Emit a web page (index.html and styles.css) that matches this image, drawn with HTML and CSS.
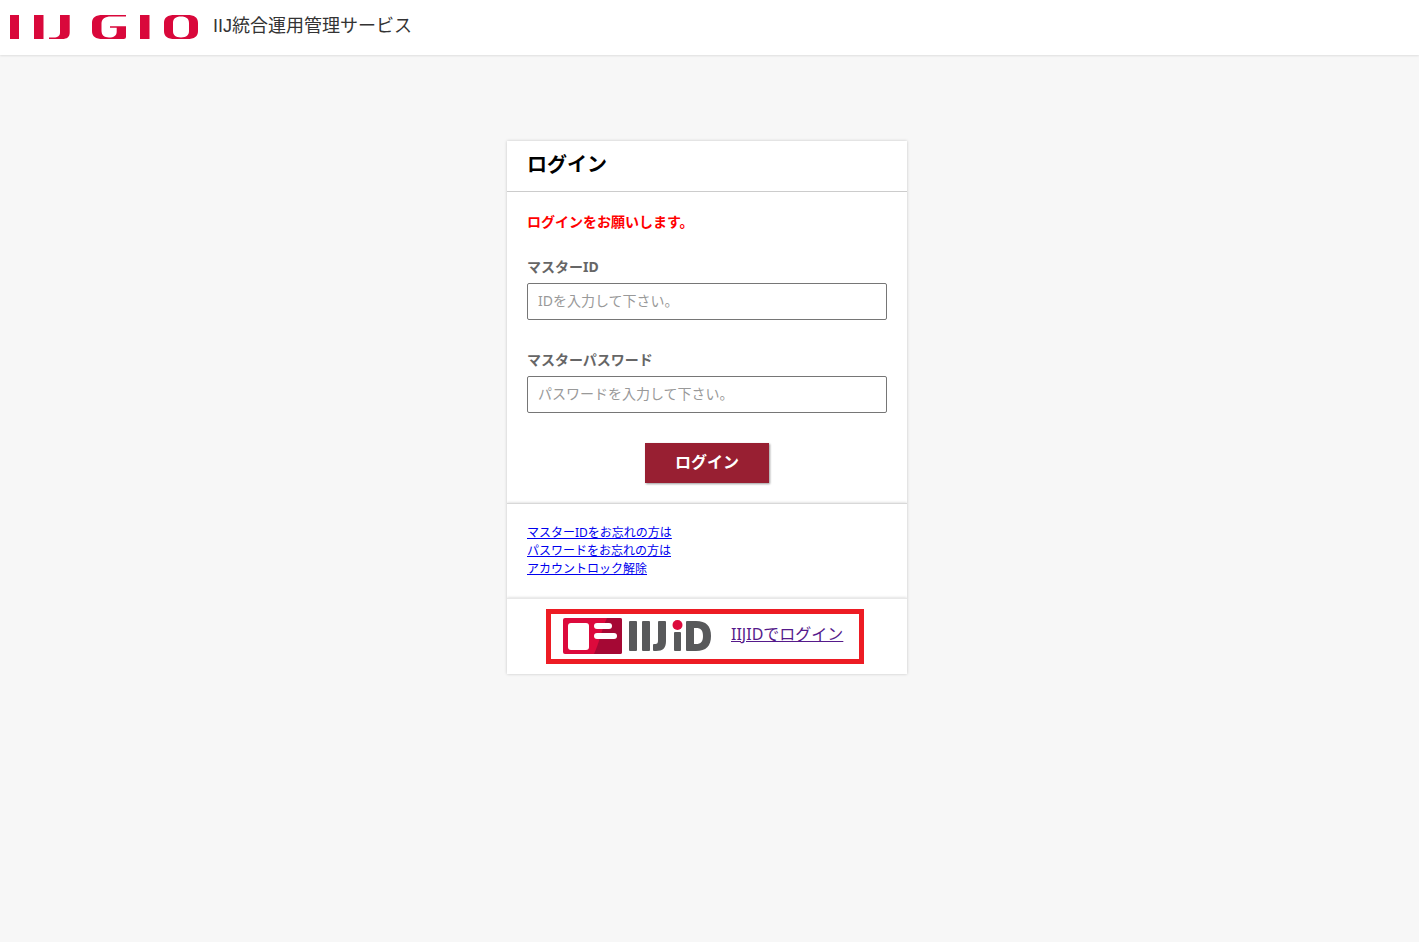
FILE: index.html
```html
<!DOCTYPE html>
<html lang="ja">
<head>
  <meta charset="UTF-8">
  <meta name="viewport" content="width=device-width, initial-scale=1.0">
  <title>ログイン | IIJ統合運用管理サービス</title>
  <link rel="stylesheet" href="styles.css">
</head>
<body>
  <header class="header">
    <svg class="gio-logo" width="188" height="24" viewBox="0 0 188 24" role="img" aria-label="IIJ GIO">
      <g fill="#d9083b">
        <rect x="0" y="0" width="9" height="24"/>
        <rect x="24" y="0" width="9.500" height="24"/>
        <path d="M50 0h9.700v17.500c0 4.500-2.700 6.500-7.500 6.500H39v-1.500h4.500c4.500 0 6.500-1.500 6.500-5z"/>
        <path d="M116 0v1.600h-15c-6 0-9.500 2.400-9.500 7v7c0 4.600 2.500 6.900 7.500 6.900s7.700-2 7.700-6v-3.700H100v-1.600h16v10.300c0 1.700-.8 2.500-2.500 2.500H93c-7.500 0-11-2.500-11-8V8c0-5.500 3.500-8 11-8z"/>
        <rect x="130" y="0" width="9.500" height="24"/>
        <path fill-rule="evenodd" d="M165 0h12c7.500 0 11 2.500 11 8v8c0 5.500-3.500 8-11 8h-12c-7.500 0-11-2.500-11-8V8c0-5.500 3.500-8 11-8zm6 1.600c-5.500 0-8 2.200-8 6.400v8c0 4.200 2.500 6.400 8 6.400s8-2.200 8-6.400V8c0-4.200-2.500-6.400-8-6.400z"/>
      </g>
    </svg>
    <span class="service-name">IIJ統合運用管理サービス</span>
  </header>

  <main class="main">
    <section class="card">
      <h1 class="card-title">ログイン</h1>
      <form class="login-form">
        <p class="message">ログインをお願いします。</p>
        <div class="field">
          <label for="masterId">マスターID</label>
          <input type="text" id="masterId" placeholder="IDを入力して下さい。">
        </div>
        <div class="field">
          <label for="masterPassword">マスターパスワード</label>
          <input type="password" id="masterPassword" placeholder="パスワードを入力して下さい。">
        </div>
        <button type="submit" class="login-button">ログイン</button>
      </form>
    </section>

    <section class="card links">
      <a href="#">マスターIDをお忘れの方は</a>
      <a href="#">パスワードをお忘れの方は</a>
      <a href="#">アカウントロック解除</a>
    </section>

    <section class="card sso">
      <div class="sso-box">
        <svg class="iijid-logo" width="148" height="36" viewBox="0 0 148 36" role="img" aria-label="IIJ iD">
          <rect width="59" height="36" rx="2" fill="#dc0a3c"/>
          <path d="M44 0h13a2 2 0 0 1 2 2v32a2 2 0 0 1-2 2H31c5-10 7-23 13-36z" fill="#a50834"/>
          <rect x="5" y="5" width="21" height="27" rx="3" fill="#fff"/>
          <rect x="31" y="5" width="18" height="6" rx="3" fill="#fff"/>
          <rect x="31" y="15" width="23" height="6" rx="3" fill="#fff"/>
          <g fill="#58595b">
            <rect x="66" y="3" width="8" height="30" rx="1"/>
            <rect x="79" y="3" width="8" height="30" rx="1"/>
            <path d="M96 3h6a1 1 0 0 1 1 1v19c0 7-3 10-10 10h-2a1 1 0 0 1-1-1v-5a1 1 0 0 1 1-1h1c2.500 0 3-1 3-4V4a1 1 0 0 1 1-1z"/>
            <rect x="111" y="14" width="7" height="19" rx="1"/>
            <path fill-rule="evenodd" d="M124 3h9c10 0 15 5 15 15s-5 15-15 15h-9a1 1 0 0 1-1-1V4a1 1 0 0 1 1-1zm7 7v16h2c5 0 7-2.500 7-8s-2-8-7-8z"/>
          </g>
          <circle cx="114.500" cy="7" r="5" fill="#dc0a3c"/>
        </svg>
        <a href="#">IIJIDでログイン</a>
      </div>
    </section>
  </main>
</body>
</html>
```
FILE: styles.css
```css
* {
  box-sizing: border-box;
}
body {
  margin: 0;
  background-color: #f7f7f7;
  color: #000;
  font-family: "Noto Sans", "Noto Sans CJK JP", sans-serif;
  font-size: 14px;
  line-height: 20px;
}
.header {
  display: flex;
  align-items: center;
  gap: 15px;
  height: 55px;
  padding: 0 10px 2px;
  background-color: #fff;
  box-shadow: 0 1px 2px rgba(0, 0, 0, 0.1);
}
.service-name {
  padding-bottom: 2px;
  color: #333;
  font-family: "Liberation Sans", "Noto Sans CJK JP", sans-serif;
  font-size: 18px;
}
.main {
  display: flex;
  flex-direction: column;
  align-items: center;
  padding: 86px 5px 20px 0;
}
.card {
  width: 400px;
  max-width: 100%;
  background-color: #fff;
  box-shadow: 0 0 3px rgba(0, 0, 0, 0.2);
}
.card-title {
  margin: 0;
  padding: 9px 20px 11px;
  border-bottom: 1px solid #ccc;
  font-size: 20px;
  line-height: 30px;
}
.login-form {
  display: flex;
  flex-direction: column;
  padding: 20px;
}
.message {
  margin: 0 0 25px;
  color: #f00;
  font-weight: bold;
}
.field {
  display: flex;
  flex-direction: column;
  gap: 6px;
  margin-bottom: 30px;
}
.field label {
  color: #666;
  font-weight: bold;
}
.field input {
  width: 100%;
  height: 37px;
  padding: 0 10px 2px;
  border: 1px solid #767676;
  border-radius: 2px;
  font-family: inherit;
  font-size: 14px;
}
.field input::placeholder {
  color: #999;
}
.login-button {
  align-self: center;
  width: 124px;
  height: 40px;
  padding: 0 0 4px;
  border: none;
  background-color: #981f32;
  box-shadow: 1px 1px 2px rgba(0, 0, 0, 0.4);
  color: #fff;
  font-family: inherit;
  font-size: 16px;
  font-weight: bold;
  cursor: pointer;
}
.links {
  display: flex;
  flex-direction: column;
  align-items: flex-start;
  padding: 20px;
  border-top: 1px solid #d8d8d8;
  font-size: 12px;
  line-height: 18px;
}
.links a {
  color: #00e;
}
.sso {
  padding: 10px 43px 10px 39px;
  border-top: 1px solid #e8e8e8;
}
.sso-box {
  display: flex;
  align-items: center;
  gap: 20px;
  height: 55px;
  padding: 0 10px 2px 12px;
  border: 5px solid #ed1c24;
  white-space: nowrap;
}
.sso-box a {
  padding-bottom: 4px;
  color: #551a8b;
  font-size: 16px;
}
```
